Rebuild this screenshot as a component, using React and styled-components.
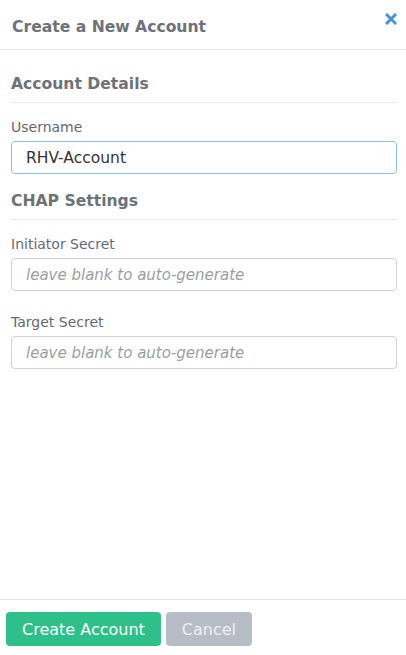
import React from 'react';
import styled, {createGlobalStyle} from 'styled-components';

const Global = createGlobalStyle`
  html, body {
    margin: 0;
    padding: 0;
    background: #fff;
  }
  body {
    font-family: "DejaVu Sans", Verdana, sans-serif;
  }
`;

const Modal = styled.div`
  display: flex;
  flex-direction: column;
  height: 655px;
  width: 406px;
  box-sizing: border-box;
`;

const Header = styled.div`
  display: flex;
  align-items: flex-start;
  justify-content: space-between;
  height: 50px;
  border-bottom: 1px solid #e6e6e6;
  box-sizing: border-box;
  padding: 17px 9px 0 12px;
`;

const Title = styled.h1`
  margin: 0;
  font-size: 15.6px;
  font-weight: bold;
  color: #6d7278;
  line-height: 20px;
`;

const Close = styled.button`
  border: 0;
  background: none;
  padding: 0;
  margin-top: -4px;
  cursor: pointer;
  display: flex;
`;

const Body = styled.div`
  flex: 1;
  padding: 0 9px 0 11px;
`;

const Section = styled.h2`
  margin: ${p => p.top || 24}px 0 0;
  padding-bottom: 8px;
  border-bottom: 1px solid #ececec;
  font-size: 15.6px;
  font-weight: bold;
  color: #6d7278;
  line-height: 20px;
`;

const Field = styled.div`
  display: flex;
  flex-direction: column;
  margin-top: ${p => p.gap || 15}px;
`;

const Label = styled.label`
  font-size: 14px;
  color: #666a70;
  line-height: 18px;
  margin-bottom: 5px;
`;

const Input = styled.input`
  height: 33px;
  box-sizing: border-box;
  border: 1px solid ${p => (p.focused ? '#8fc1ec' : '#cfd2d6')};
  border-radius: 4px;
  padding: 0 14px;
  font-family: "DejaVu Sans", Verdana, sans-serif;
  font-size: 15.5px;
  color: #333;
  outline: none;
  &::placeholder {
    font-size: 15px;
    color: #9a9ea3;
    font-style: italic;
  }
`;

const Footer = styled.div`
  display: flex;
  gap: 5px;
  border-top: 1px solid #e6e6e6;
  padding: 12px 6px 9px;
`;

const Button = styled.button`
  height: 34px;
  border: 0;
  border-radius: 4px;
  padding: 0 ${p => p.pad || 16}px;
  font-family: "DejaVu Sans", Verdana, sans-serif;
  font-size: 16px;
  color: ${p => (p.primary ? '#fff' : '#eef0f3')};
  background: ${p => (p.primary ? '#2dc08a' : '#b6bdc6')};
  cursor: pointer;
`;

const App = () => (
  <Modal>
    <Global />
    <Header>
      <Title>Create a New Account</Title>
      <Close aria-label="close">
        <svg width="12" height="12" viewBox="0 0 12 12">
          <path d="M2 2 L10 10 M10 2 L2 10" stroke="#4a90e2" strokeWidth="3" strokeLinecap="square" />
        </svg>
      </Close>
    </Header>
    <Body>
      <Section>Account Details</Section>
      <Field gap={15}>
        <Label>Username</Label>
        <Input focused defaultValue="RHV-Account" />
      </Field>
      <Section top={17}>CHAP Settings</Section>
      <Field gap={15}>
        <Label>Initiator Secret</Label>
        <Input placeholder="leave blank to auto-generate" />
      </Field>
      <Field gap={22}>
        <Label>Target Secret</Label>
        <Input placeholder="leave blank to auto-generate" />
      </Field>
    </Body>
    <Footer>
      <Button primary>Create Account</Button>
      <Button pad={16}>Cancel</Button>
    </Footer>
  </Modal>
);

export default App;
